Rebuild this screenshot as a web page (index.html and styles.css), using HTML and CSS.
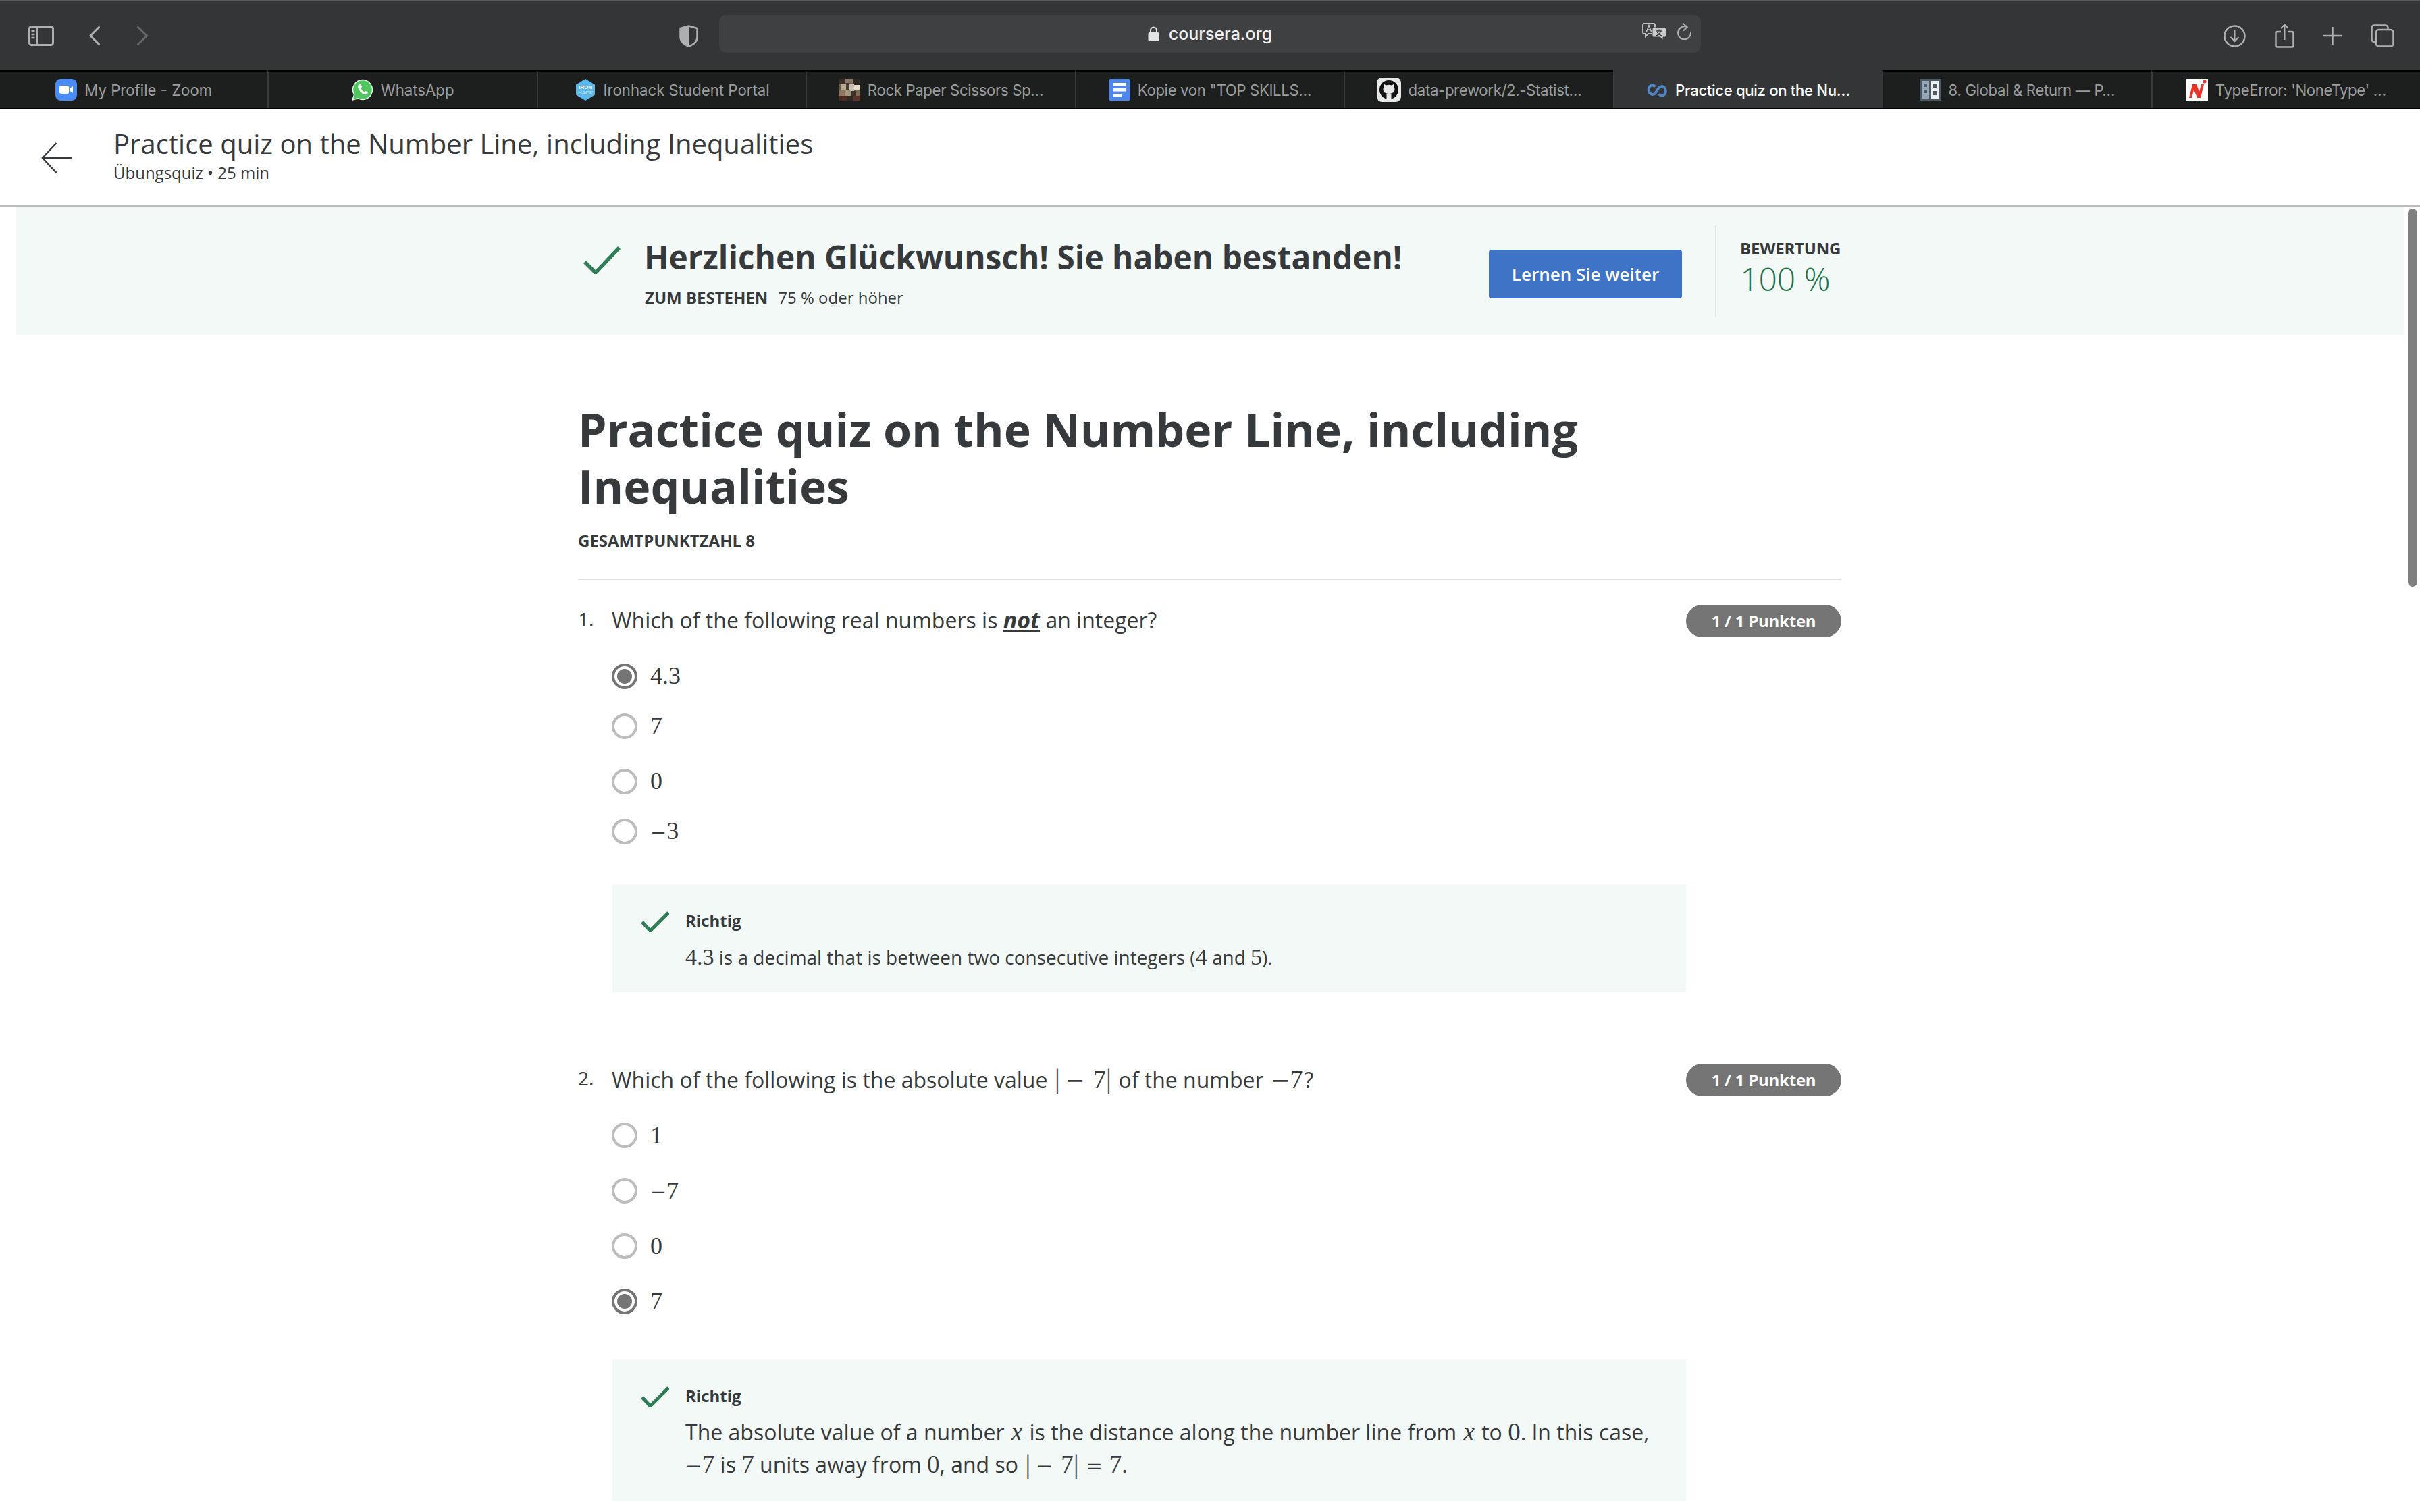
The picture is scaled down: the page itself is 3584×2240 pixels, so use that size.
FILE: index.html
```html
<!DOCTYPE html>
<html lang="de">
<head>
<meta charset="utf-8">
<title>Practice quiz on the Number Line, including Inequalities</title>
<link rel="stylesheet" href="styles.css">
</head>
<body>
<div class="toolbar">
  <div class="tb-left">
    <svg class="ic-sidebar" viewBox="0 0 38 30"><rect x="1.500" y="1.500" width="35" height="27" rx="3" fill="none" stroke="#aeafb0" stroke-width="3"/><path d="M13 2v26" stroke="#aeafb0" stroke-width="2.500"/><path d="M4.500 8h5M4.500 13h5M4.500 18h5" stroke="#aeafb0" stroke-width="2.500"/></svg>
    <svg class="ic-back" viewBox="0 0 16 28"><path d="M14.500 1.500 2 14l12.500 12.500" fill="none" stroke="#aeafb0" stroke-width="3" stroke-linecap="round" stroke-linejoin="round"/></svg>
    <svg class="ic-forward" viewBox="0 0 18 28"><path d="M2.500 1.500 15.500 14 2.500 26.500" fill="none" stroke="#67686a" stroke-width="3" stroke-linecap="round" stroke-linejoin="round"/></svg>
    <svg class="ic-shield" viewBox="0 0 28 33"><path d="M14 1.500 26.500 5v13c0 6-5 11-12.500 13.500C6.500 29 1.500 24 1.500 18V5Z" fill="none" stroke="#aeafb0" stroke-width="2.500"/><path d="M14 1.500 1.500 5v13c0 6 5 11 12.500 13.500Z" fill="#aeafb0"/></svg>
  </div>
  <div class="urlbar">
    <svg class="ic-lock" viewBox="0 0 17 22"><path d="M4 10V6a4.500 4.500 0 0 1 9 0v4" fill="none" stroke="#e4e4e4" stroke-width="2"/><rect x="0.500" y="9" width="16" height="13" rx="2" fill="#e4e4e4"/></svg>
    <span class="url-text">coursera.org</span>
    <div class="url-tools">
      <svg class="ic-translate" viewBox="0 0 36 26"><path d="M3 1h14a2 2 0 0 1 2 2v11a2 2 0 0 1-2 2H9l-4 4v-4H3a2 2 0 0 1-2-2V3a2 2 0 0 1 2-2Z" fill="none" stroke="#c4c5c6" stroke-width="1.800"/><path d="M6.500 13 10 3.500 13.500 13M7.800 10h4.600" fill="none" stroke="#c4c5c6" stroke-width="1.500"/><path d="M17 7h16.500a2 2 0 0 1 2 2v10a2 2 0 0 1-2 2H31v4.500L26.500 21H17a2 2 0 0 1-2-2V9a2 2 0 0 1 2-2Z" fill="#c9cacb" stroke="#3f4042" stroke-width="1"/><path d="M20 12h10M25 9.500V12M21 19c3.500-1.500 5.500-3.500 6.500-7M22.500 14c1 2 3.500 4 7 5" fill="none" stroke="#3f4042" stroke-width="1.400"/></svg>
      <svg class="ic-reload" viewBox="0 0 23 25"><path d="M15.500 6.200A9.500 9.500 0 1 0 21 14" fill="none" stroke="#aeafb0" stroke-width="2"/><path d="M9.500 .8 15.800 6.200 10 11.500" fill="none" stroke="#aeafb0" stroke-width="2"/></svg>
    </div>
  </div>
  <div class="tb-right">
    <svg class="ic-download" viewBox="0 0 33 33"><circle cx="16.500" cy="16.500" r="15" fill="none" stroke="#aeafb0" stroke-width="2.500"/><path d="M16.500 8v16M10.500 18l6 6 6-6" fill="none" stroke="#aeafb0" stroke-width="2"/></svg>
    <svg class="ic-share" viewBox="0 0 29 36"><path d="M9 12H3.500a2 2 0 0 0-2 2v18.500a2 2 0 0 0 2 2h22a2 2 0 0 0 2-2V14a2 2 0 0 0-2-2H20" fill="none" stroke="#aeafb0" stroke-width="2.500"/><path d="M14.500 24V1.500M9 7l5.500-5.500L20 7" fill="none" stroke="#aeafb0" stroke-width="2"/></svg>
    <svg class="ic-plus" viewBox="0 0 27 26"><path d="M13.500 0v26M0 13h27" stroke="#aeafb0" stroke-width="2.500"/></svg>
    <svg class="ic-tabs" viewBox="0 0 35 34"><rect x="8" y="8" width="25.500" height="24.500" rx="4" fill="none" stroke="#aeafb0" stroke-width="2.500"/><path d="M8 26H5a3.500 3.500 0 0 1-3.500-3.500V5A3.500 3.500 0 0 1 5 1.500h17A3.500 3.500 0 0 1 25.500 5v3" fill="none" stroke="#aeafb0" stroke-width="2.500"/></svg>
  </div>
</div>

<div class="tabs">
  <div class="tab"><svg class="fav" viewBox="0 0 32 32"><rect width="32" height="32" rx="8" fill="#4a8cf7"/><rect x="6" y="10" width="14" height="12" rx="2.500" fill="#fff"/><path d="M21 14.500 26 11v10l-5-3.500Z" fill="#fff"/></svg><span>My Profile - Zoom</span></div>
  <div class="tab"><svg class="fav" viewBox="0 0 32 32"><path d="M16 1.500a14.500 14.500 0 0 0-12.500 21.800L1 31l8-2.300A14.500 14.500 0 1 0 16 1.500Z" fill="#4fc75e" stroke="#e8f5e8" stroke-width="1.500"/><path d="M11 8c-2 1.500-2.500 4-1 7 2 4 5 6.500 8.500 8 2.500.8 4.800-.5 5.500-2.500l-3.500-2.500-2 1.500c-2-1-4-3-5-5.500l1.500-2L13 8Z" fill="#fff"/></svg><span>WhatsApp</span></div>
  <div class="tab"><svg class="fav" viewBox="0 0 32 32"><path d="M16 0 30 8.500v15L16 32 2 23.500v-15Z" fill="#5bb9f2"/><text x="16" y="15" class="fav-iron">IRON</text><text x="16" y="23" class="fav-hack">HACK</text></svg><span>Ironhack Student Portal</span></div>
  <div class="tab trunc"><svg class="fav" viewBox="0 0 32 32"><rect width="32" height="32" fill="#6b5a48"/><rect x="0" y="0" width="10" height="8" fill="#3a2f26"/><rect x="10" y="0" width="12" height="6" fill="#8a7a68"/><rect x="22" y="0" width="10" height="9" fill="#2e2822"/><rect x="3" y="8" width="8" height="9" fill="#b7a994"/><rect x="11" y="6" width="5" height="10" fill="#4a3e32"/><rect x="16" y="8" width="7" height="10" fill="#c9bfae"/><rect x="23" y="9" width="9" height="8" fill="#e1d9c9"/><rect x="0" y="17" width="9" height="8" fill="#8b7660"/><rect x="9" y="16" width="9" height="9" fill="#a59680"/><rect x="18" y="18" width="7" height="7" fill="#3b3128"/><rect x="25" y="17" width="7" height="8" fill="#7a6a58"/><rect x="0" y="25" width="12" height="7" fill="#4b2b22"/><rect x="12" y="25" width="10" height="7" fill="#332923"/><rect x="22" y="25" width="10" height="7" fill="#5c3328"/></svg><span>Rock Paper Scissors Sp…</span></div>
  <div class="tab trunc"><svg class="fav" viewBox="0 0 32 32"><rect width="32" height="32" rx="3" fill="#4e86ea"/><rect x="6" y="6" width="20" height="4.500" fill="#fff"/><rect x="6" y="14" width="20" height="4.500" fill="#fff"/><rect x="6" y="22" width="13" height="4.500" fill="#fff"/></svg><span>Kopie von "TOP SKILLS…</span></div>
  <div class="tab trunc"><svg class="fav fav-big" viewBox="0 0 36 36"><rect width="36" height="36" rx="8" fill="#e8e8e8"/><circle cx="18" cy="18" r="14" fill="#111"/><path d="M11 10l3 1.500a12 12 0 0 1 8 0l3-1.500.6 4c1.600 3 1 6.500-1.600 8.500-2 1.300-5 1.500-6 1.500s-4-.2-6-1.500C9.400 20.500 8.800 17 10.400 14Z" fill="#e8e8e8"/><rect x="14.500" y="24" width="7" height="9" fill="#e8e8e8"/></svg><span>data-prework/2.-Statist…</span></div>
  <div class="tab trunc tab-active"><svg class="fav" viewBox="0 0 32 32"><path d="M13.500 11.500C11 9 8 9 6 10.500c-3 2.500-3 8.500 0 11 2.500 2 6 2 8-1l4.500-7c2-3 5.500-3 8-1 3 2.500 3 8.500 0 11-2 1.500-5 1.500-7.500-1" fill="none" stroke="#4f86c6" stroke-width="4"/></svg><span>Practice quiz on the Nu…</span></div>
  <div class="tab trunc"><svg class="fav" viewBox="0 0 32 32"><rect width="32" height="32" fill="#4d5a66"/><rect x="3" y="3" width="11" height="26" fill="#94a8ba"/><rect x="17" y="3" width="12" height="26" fill="#eef1f3"/><rect x="6" y="7" width="5" height="5" fill="#4d5a66"/><rect x="6" y="16" width="5" height="5" fill="#4d5a66"/><rect x="20" y="7" width="6" height="6" fill="#4d5a66"/><rect x="20" y="18" width="6" height="6" fill="#4d5a66"/></svg><span>8. Global &amp; Return — P…</span></div>
  <div class="tab trunc"><svg class="fav" viewBox="0 0 32 32"><rect width="32" height="32" fill="#fff"/><path d="M4 28 9 8h6l4 11 3-11h4l-5 20h-5l-5-12-3 12Z" fill="#e8342c"/><circle cx="27" cy="4" r="2.500" fill="#e8342c"/></svg><span>TypeError: 'NoneType' …</span></div>
</div>

<header class="page-head">
  <svg class="ic-arrow" viewBox="0 0 48 48"><path d="M23.500 1 2 24l21.500 23M2 24h46" fill="none" stroke="#373a3c" stroke-width="2.500"/></svg>
  <div>
    <div class="head-title">Practice quiz on the Number Line, including Inequalities</div>
    <div class="head-sub">Übungsquiz • 25 min</div>
  </div>
</header>

<section class="banner">
  <div class="banner-inner">
    <svg class="ic-bigcheck" viewBox="0 0 55 41"><path d="M2 23 18 39 53 2" fill="none" stroke="#2f7d55" stroke-width="5.500"/></svg>
    <div class="banner-msg">
      <div class="banner-title">Herzlichen Glückwunsch! Sie haben bestanden!</div>
      <div class="banner-pass"><b>ZUM BESTEHEN</b><span>75 % oder höher</span></div>
    </div>
    <a class="btn">Lernen Sie weiter</a>
    <div class="score">
      <div class="score-label">BEWERTUNG</div>
      <div class="score-value">100 %</div>
    </div>
  </div>
</section>

<main class="content">
  <h1 class="quiz-title">Practice quiz on the Number Line, including Inequalities</h1>
  <div class="total">GESAMTPUNKTZAHL 8</div>

  <article class="question q1">
    <div class="q-num">1.</div>
    <div class="q-body">
      <div class="q-text">Which of the following real numbers is <strong class="not">not</strong> an integer?</div>
      <div class="options">
        <div class="option"><span class="radio radio-on"></span><span class="math">4.3</span></div>
        <div class="option"><span class="radio"></span><span class="math">7</span></div>
        <div class="option option-gap"><span class="radio"></span><span class="math">0</span></div>
        <div class="option"><span class="radio"></span><span class="math"><span class="minus">−</span>3</span></div>
      </div>
      <div class="feedback">
        <svg class="ic-check" viewBox="0 0 42 31"><path d="M2 16 14 29 41 2" fill="none" stroke="#2f7d55" stroke-width="5"/></svg>
        <div class="fb-label">Richtig</div>
        <div class="fb-text"><span class="math">4.3</span> is a decimal that is between two consecutive integers (<span class="math">4</span> and <span class="math">5</span>).</div>
      </div>
    </div>
    <div class="pill">1 / 1 Punkten</div>
  </article>

  <article class="question q2">
    <div class="q-num">2.</div>
    <div class="q-body">
      <div class="q-text">Which of the following is the absolute value <span class="math"><span class="bar">|</span><span class="minus minus-spaced">−</span>7<span class="bar">|</span></span> of the number <span class="math"><span class="minus">−</span>7</span>?</div>
      <div class="options">
        <div class="option option-tall"><span class="radio"></span><span class="math">1</span></div>
        <div class="option option-tall"><span class="radio"></span><span class="math"><span class="minus">−</span>7</span></div>
        <div class="option option-tall"><span class="radio"></span><span class="math">0</span></div>
        <div class="option option-tall"><span class="radio radio-on"></span><span class="math">7</span></div>
      </div>
      <div class="feedback">
        <svg class="ic-check" viewBox="0 0 42 31"><path d="M2 16 14 29 41 2" fill="none" stroke="#2f7d55" stroke-width="5"/></svg>
        <div class="fb-label">Richtig</div>
        <div class="fb-text">The absolute value of a number <i class="math math-var">x</i> is the distance along the number line from <i class="math math-var">x</i> to <span class="math">0</span>. In this case,<br><span class="math"><span class="minus">−</span>7</span> is <span class="math">7</span> units away from <span class="math">0</span>, and so <span class="math math-abs"><span class="bar">|</span><span class="minus minus-spaced">−</span>7<span class="bar">|</span><span class="minus equals">=</span>7</span>.</div>
      </div>
    </div>
    <div class="pill">1 / 1 Punkten</div>
  </article>
</main>

<div class="scrollbar"></div>
</body>
</html>
```
FILE: styles.css
```css
* { box-sizing: border-box; }
html, body { margin: 0; height: 2240px; overflow: hidden; background: #fff; }
body { font-family: "Open Sans", sans-serif; color: #373a3c; position: relative; }
svg { display: block; flex: none; }

.toolbar { height: 104px; background: #343537; border-top: 2px solid #5a5a5c; display: grid; grid-template-columns: 1065px 1454px 1065px; align-items: center; }
.tb-left { display: flex; align-items: center; padding: 0 31px 0 42px; }
.ic-sidebar { width: 38px; height: 30px; margin-right: 52px; }
.ic-back { width: 16px; height: 28px; margin-right: 54px; }
.ic-forward { width: 18px; height: 28px; }
.ic-shield { width: 28px; height: 33px; margin-left: auto; }
.urlbar { height: 56px; margin-top: -6px; background: #3f4042; border-radius: 10px; display: flex; align-items: center; justify-content: center; gap: 14px; position: relative; }
.ic-lock { width: 17px; height: 22px; }
.url-text { font: 500 25px "Inter", sans-serif; color: #f0f0f0; }
.url-tools { position: absolute; right: 13px; top: 12px; display: flex; gap: 15px; }
.ic-translate { width: 36px; height: 26px; }
.ic-reload { width: 23px; height: 25px; }
.tb-right { display: flex; justify-content: flex-end; align-items: center; gap: 43px; padding-right: 38px; }
.ic-download { width: 33px; height: 33px; }
.ic-share { width: 29px; height: 36px; }
.ic-plus { width: 27px; height: 26px; }
.ic-tabs { width: 35px; height: 34px; }

.tabs { height: 57px; display: flex; background: #1d1f1f; border-bottom: 1px solid #000; }
.tab { flex: 1 1 0; min-width: 0; display: flex; align-items: center; justify-content: center; gap: 11px; border-top: 2px solid #000; font: 400 22.200px "Inter", sans-serif; color: #9b9c9c; white-space: nowrap; }
.tab + .tab { border-left: 2px solid #3a3b3c; }
.trunc { letter-spacing: -0.350px; }
.tab-active { background: #343537; border-top-color: #343537; color: #fff; font-weight: 500; }
.fav { width: 32px; height: 32px; }
.fav-big { width: 36px; height: 36px; }
.fav-iron, .fav-hack { font: 700 8px "Liberation Sans", sans-serif; fill: #fff; text-anchor: middle; letter-spacing: 0; }
.fav-hack { font-weight: 400; fill: #d4eefc; }

.page-head { height: 145px; border-bottom: 2px solid #bcbdbc; display: flex; align-items: center; padding-left: 61px; gap: 61px; }
.ic-arrow { width: 46px; height: 46px; margin-top: 3px; }
.head-title { font-size: 40px; line-height: 56px; margin-top: -9px; }
.head-sub { font-size: 24px; line-height: 30px; }

.banner { height: 191px; margin: 0 24px; background: #f3f9f7; }
.banner-inner { width: 1870px; margin: 0 auto; height: 100%; display: flex; align-items: flex-start; }
.ic-bigcheck { width: 55px; height: 41px; margin: 59px 36px 0 7px; }
.banner-msg { width: 1250px; padding-top: 41px; }
.banner-title { font-size: 47.800px; font-weight: 700; line-height: 68px; margin-left: -1px; }
.banner-pass { font-size: 24px; line-height: 32px; margin-top: 10px; display: flex; gap: 15px; }
.banner-pass b { font-weight: 700; }
.btn { width: 286px; height: 72px; margin-top: 64px; background: #3f73c6; border-radius: 4px; color: #fff; font-size: 26px; font-weight: 600; display: flex; align-items: center; justify-content: center; }
.score { height: 136px; margin: 28px 0 0 49px; padding-left: 35px; border-left: 2px solid #e1e5e3; }
.score-label { font-size: 24px; font-weight: 700; letter-spacing: -0.200px; line-height: 32px; margin-top: 18px; }
.score-value { font-size: 48px; font-weight: 300; line-height: 54px; margin-top: 2px; color: #1f7148; }

.content { width: 1871px; margin-left: 856px; padding-top: 97px; }
.quiz-title { margin: 0; width: 1600px; font-size: 68px; font-weight: 700; line-height: 84px; }
.total { font-size: 24px; font-weight: 700; line-height: 32px; margin-top: 23px; padding-bottom: 41px; border-bottom: 2px solid #e1e1e1; }

.question { display: grid; grid-template-columns: 51px 1590px 230px; align-items: start; }
.q1 { margin-top: 36px; }
.q2 { margin-top: 106px; }
.q-num { font-size: 28px; line-height: 42px; }
.q-text { font-size: 32px; line-height: 48px; height: 48px; margin: -2px 0 0 -1px; }
.q-text .math { font-size: 38px; margin: 0 2px; }
.not { font-size: 34px; font-weight: 700; font-style: italic; text-decoration: underline; }
.math { font-family: "Liberation Serif", serif; font-size: 36px; }
.minus { font-family: "DejaVu Serif", serif; font-size: 0.800em; }
.q-text .minus { font-size: 0.900em; }
.minus-spaced { margin: 0 12px 0 8px; }
.equals { margin: 0 10px; }
.math-var { margin: 0 2px; }
.math-abs { margin-left: 2px; }
.bar { font-size: 1.100em; font-weight: 400; color: #55585a; }
.options { margin-top: 23px; }
.q2 .options { margin-top: 19px; }
.option { height: 74px; display: flex; align-items: center; gap: 19px; font-size: 34px; }
.q1 .option .math { margin-top: -2px; }
.option-gap { margin-top: 8px; }
.option-tall { height: 82px; }
.radio { width: 38px; height: 38px; margin-left: -1px; border-radius: 50%; border: 4px solid #bdbdbd; flex: none; }
.radio-on { border-color: #757575; background: radial-gradient(circle, #757575 0 10.500px, #fff 11.500px); }
.feedback { margin-top: 41px; padding: 38px 20px 28px 108px; background: #f3f9f7; position: relative; }
.q2 .feedback { margin-top: 45px; padding-bottom: 30px; }
.ic-check { position: absolute; left: 42px; top: 40px; width: 42px; height: 31px; }
.fb-label { font-size: 24px; font-weight: 700; line-height: 32px; }
.fb-text { font-size: 28px; line-height: 48px; margin-top: 14px; white-space: nowrap; }
.fb-text .math { font-size: 34px; line-height: 1; }
.q2 .fb-text { font-size: 32px; }
.q2 .fb-text .math { font-size: 37px; }
.pill { width: 230px; height: 48px; padding-bottom: 2px; background: #757575; border-radius: 24px; color: #fff; font-size: 24px; font-weight: 700; letter-spacing: -0.250px; display: flex; align-items: center; justify-content: center; }

.scrollbar { position: absolute; left: 3566px; top: 309px; width: 14px; height: 560px; border-radius: 7px; background: #7f7f7f; }
```
